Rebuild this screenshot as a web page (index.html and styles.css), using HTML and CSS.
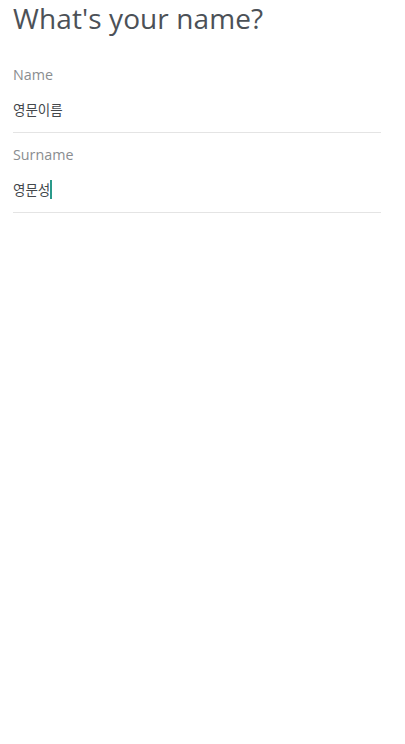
FILE: index.html
```html
<!DOCTYPE html>
<html lang="en">
<head>
<meta charset="utf-8">
<link rel="stylesheet" href="styles.css">
</head>
<body>
<main class="screen">
  <h1 class="title">What's your name?</h1>
  <div class="field">
    <div class="label">Name</div>
    <div class="value">영문이름</div>
  </div>
  <div class="field">
    <div class="label">Surname</div>
    <div class="value">영문성<span class="cursor"></span></div>
  </div>
</main>
</body>
</html>
```
FILE: styles.css
```css
html, body {
  margin: 0;
  padding: 0;
  background: #ffffff;
}
.screen {
  width: 405px;
  height: 744px;
  padding: 0 24px 0 13px;
  box-sizing: border-box;
  font-family: "Open Sans", "Noto Sans", "Noto Sans CJK KR", sans-serif;
}
.title {
  margin: 0;
  font-size: 28px;
  font-weight: 400;
  line-height: 36px;
  color: #4c5157;
  letter-spacing: 0.1px;
}
.field {
  border-bottom: 1.5px solid #e4e4e4;
}
.field:first-of-type {
  margin-top: 30px;
}
.label {
  font-size: 14.3px;
  line-height: 18px;
  color: #8a8d90;
  padding-top: 13px;
}
.field:first-of-type .label {
  padding-top: 0;
}
.value {
  font-family: "Noto Sans CJK KR", "Noto Sans", sans-serif;
  font-size: 13.5px;
  line-height: 20px;
  color: #44484c;
  padding-top: 15px;
  padding-bottom: 13px;
  display: flex;
  align-items: center;
}
.cursor {
  display: inline-block;
  width: 2px;
  height: 19px;
  background: #2a9a8a;
}
```
